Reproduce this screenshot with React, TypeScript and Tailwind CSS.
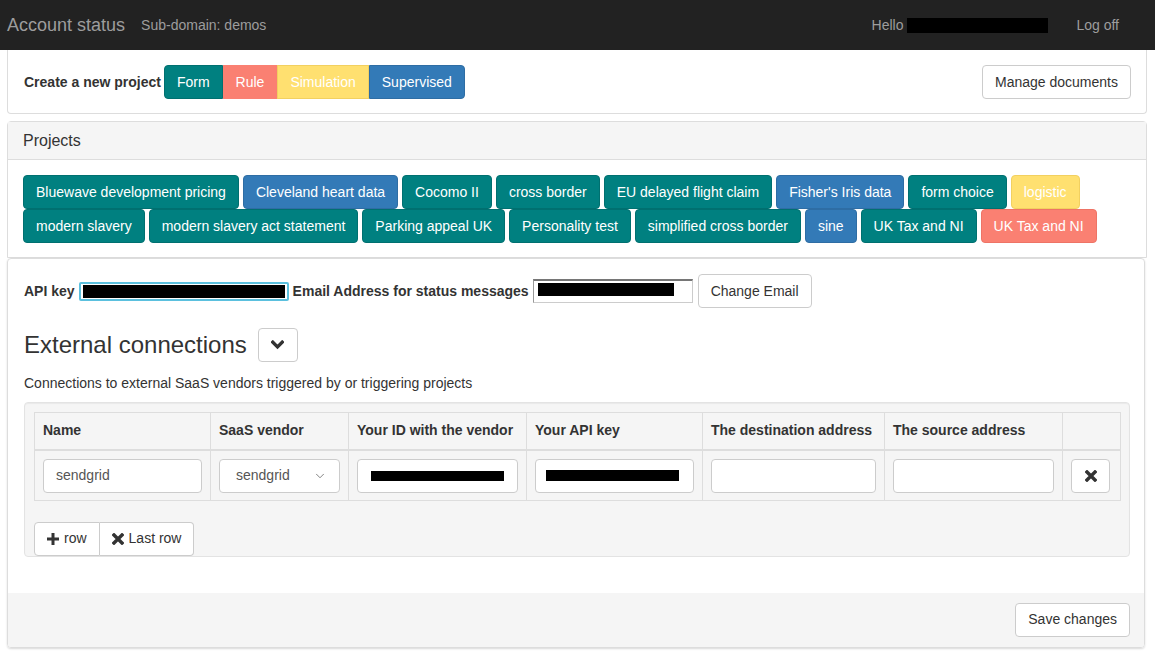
import { ChevronDown } from "lucide-react";

const font = { fontFamily: '"Liberation Sans", Arial, sans-serif' };

function PlusIcon() {
  return (
    <svg width="12" height="12" viewBox="0 0 12 12" className="inline-block">
      <path d="M4.5 0h3v4.5H12v3H7.5V12h-3V7.5H0v-3h4.5z" fill="#333" />
    </svg>
  );
}

function RemoveIcon() {
  return (
    <svg width="12" height="12" viewBox="0 0 12 12" className="inline-block">
      <path d="M2 2l8 8M10 2l-8 8" stroke="#333" strokeWidth="3.4" strokeLinecap="square" />
    </svg>
  );
}

function BoldChevron() {
  return (
    <svg width="13" height="10" viewBox="0 0 13 10">
      <path d="M1.8 2.2l4.7 4.7 4.7-4.7" fill="none" stroke="#333" strokeWidth="3.4" strokeLinecap="square" />
    </svg>
  );
}

const projects = [
  { name: "Bluewave development pricing", kind: "form" },
  { name: "Cleveland heart data", kind: "sup" },
  { name: "Cocomo II", kind: "form" },
  { name: "cross border", kind: "form" },
  { name: "EU delayed flight claim", kind: "form" },
  { name: "Fisher's Iris data", kind: "sup" },
  { name: "form choice", kind: "form" },
  { name: "logistic", kind: "sim" },
  { name: "modern slavery", kind: "form" },
  { name: "modern slavery act statement", kind: "form" },
  { name: "Parking appeal UK", kind: "form" },
  { name: "Personality test", kind: "form" },
  { name: "simplified cross border", kind: "form" },
  { name: "sine", kind: "sup" },
  { name: "UK Tax and NI", kind: "form" },
  { name: "UK Tax and NI", kind: "rule" },
];

const kindClass: Record<string, string> = {
  form: "bg-[#008080] border-[#007070]",
  sup: "bg-[#337ab7] border-[#2e6da4]",
  sim: "bg-[#ffe070] border-[#f2d060]",
  rule: "bg-[#fa8072] border-[#ee7466]",
};

const cols = [
  { label: "Name", w: "w-[176px]" },
  { label: "SaaS vendor", w: "w-[138px]" },
  { label: "Your ID with the vendor", w: "w-[178px]" },
  { label: "Your API key", w: "w-[176px]" },
  { label: "The destination address", w: "w-[182px]" },
  { label: "The source address", w: "w-[178px]" },
  { label: "", w: "w-[58px]" },
];

export default function App() {
  return (
    <div style={font} className="min-h-[658px] bg-white text-[14px] text-[#333]">
      {/* navbar */}
      <nav className="h-[50px] bg-[#222] flex items-center pl-[7px] pr-[36px] text-[#9d9d9d]">
        <span className="text-[18px]">Account status</span>
        <span className="ml-[16px] text-[14px]">Sub-domain: demos</span>
        <div className="ml-auto flex items-center">
          <span>Hello</span>
          <span className="ml-[4px] inline-block w-[141px] h-[15px] bg-black" />
          <span className="ml-[28px]">Log off</span>
        </div>
      </nav>

      {/* create panel */}
      <div className="mx-[7px] mr-[8px] border border-t-0 border-[#ddd] rounded-b-[4px] pl-[16px] pr-[15px] pt-[15px] pb-[14px] flex items-center">
        <span className="font-bold">Create a new project</span>
        <div className="ml-[3px] flex text-white">
          <span className="h-[34px] px-[12px] flex items-center bg-[#008080] border border-[#007070] rounded-l-[4px]">Form</span>
          <span className="h-[34px] px-[12px] flex items-center bg-[#fa8072] border border-[#fa8072]">Rule</span>
          <span className="h-[34px] px-[12px] flex items-center bg-[#ffe070] border border-[#f2d060]">Simulation</span>
          <span className="h-[34px] px-[12px] flex items-center bg-[#337ab7] border border-[#2e6da4] rounded-r-[4px]">Supervised</span>
        </div>
        <span className="ml-auto h-[34px] px-[12px] flex items-center border border-[#ccc] rounded-[4px] bg-white">Manage documents</span>
      </div>

      {/* projects panel */}
      <div className="mt-[7px] mx-[7px] mr-[8px] border border-[#ddd] rounded-t-[4px]">
        <div className="h-[38px] bg-[#f5f5f5] border-b border-[#ddd] px-[15px] flex items-center text-[16px]">Projects</div>
        <div className="pl-[15px] pr-[15px] pt-[15px] pb-[14px] flex flex-wrap gap-x-[4px]">
          {projects.map((p, i) => (
            <span
              key={i}
              className={`h-[34px] px-[12px] flex items-center text-white border rounded-[4px] ${kindClass[p.kind]}`}
            >
              {p.name}
            </span>
          ))}
        </div>
      </div>

      {/* settings panel */}
      <div className="mx-[7px] mr-[10px] border border-[#ddd] rounded-[4px] shadow-[0_1px_2px_rgba(0,0,0,0.15)] overflow-hidden">
        <div className="pl-[16px] pr-[14px] pt-[15px] pb-[15px]">
          <div className="flex items-center">
            <span className="font-bold">API key</span>
            <span className="ml-[4px] w-[210px] h-[19px] border-2 border-[#5bc0de] rounded-[2px] flex items-center px-[2px]">
              <span className="w-full h-[13px] bg-black" />
            </span>
            <span className="ml-[4px] font-bold">Email Address for status messages</span>
            <span className="ml-[4px] w-[160px] h-[24px] border border-[#ccc] border-t-[#767676] border-t-2 border-l-[#999] flex items-start pt-[2px] pl-[4px]">
              <span className="w-[136px] h-[13px] bg-black" />
            </span>
            <span className="ml-[5px] h-[34px] px-[12px] flex items-center border border-[#ccc] rounded-[4px] bg-white">Change Email</span>
          </div>

          <div className="mt-[20px] flex items-center">
            <h3 className="text-[24px] leading-[28px]">External connections</h3>
            <span className="ml-[11px] w-[40px] h-[34px] border border-[#ccc] rounded-[4px] flex items-center justify-center bg-white">
              <BoldChevron />
            </span>
          </div>

          <p className="mt-[11px] leading-[20px]">Connections to external SaaS vendors triggered by or triggering projects</p>

          <div className="mt-[9px] bg-[#f5f5f5] border border-[#e3e3e3] rounded-[4px] pt-[9px] px-[9px] shadow-[inset_0_1px_1px_rgba(0,0,0,0.05)]">
            <table className="table-fixed border-collapse w-[1086px]">
              <thead>
                <tr>
                  {cols.map((c, i) => (
                    <th
                      key={i}
                      className={`${c.w} h-[37px] border border-[#ddd] border-b-2 px-[8px] py-0 text-left font-bold`}
                    >
                      {c.label}
                    </th>
                  ))}
                </tr>
              </thead>
              <tbody>
                <tr>
                  <td className="border border-[#ddd] px-[8px] pt-[8px] pb-[7px]">
                    <div className="h-[34px] bg-white border border-[#ccc] rounded-[4px] px-[12px] flex items-center text-[#555]">sendgrid</div>
                  </td>
                  <td className="border border-[#ddd] px-[8px] pt-[8px] pb-[7px]">
                    <div className="h-[34px] bg-white border border-[#ccc] rounded-[4px] pl-[16px] pr-[12px] flex items-center justify-between text-[#555]">
                      sendgrid
                      <ChevronDown size={14} strokeWidth={1.25} color="#555" />
                    </div>
                  </td>
                  <td className="border border-[#ddd] px-[8px] pt-[8px] pb-[7px]">
                    <div className="h-[34px] bg-white border border-[#ccc] rounded-[4px] px-[13px] flex items-center">
                      <span className="w-[135px] h-[10px] bg-black" />
                    </div>
                  </td>
                  <td className="border border-[#ddd] px-[8px] pt-[8px] pb-[7px]">
                    <div className="h-[34px] bg-white border border-[#ccc] rounded-[4px] px-[10px] flex items-center">
                      <span className="w-[133px] h-[11px] bg-black" />
                    </div>
                  </td>
                  <td className="border border-[#ddd] px-[8px] pt-[8px] pb-[7px]">
                    <div className="h-[34px] bg-white border border-[#ccc] rounded-[4px]" />
                  </td>
                  <td className="border border-[#ddd] px-[8px] pt-[8px] pb-[7px]">
                    <div className="h-[34px] bg-white border border-[#ccc] rounded-[4px]" />
                  </td>
                  <td className="border border-[#ddd] px-[8px] pt-[8px] pb-[7px]">
                    <div className="h-[34px] w-[39px] bg-white border border-[#ccc] rounded-[4px] flex items-center justify-center">
                      <RemoveIcon />
                    </div>
                  </td>
                </tr>
              </tbody>
            </table>

            <div className="mt-[21px] flex">
              <span className="h-[34px] px-[12px] flex items-center gap-[5px] bg-white border border-[#ccc] rounded-l-[4px]">
                <PlusIcon />
                row
              </span>
              <span className="h-[34px] px-[12px] flex items-center gap-[5px] bg-white border border-l-0 border-[#ccc] rounded-r-[4px]">
                <RemoveIcon />
                Last row
              </span>
            </div>
          </div>
        </div>

        <div className="mt-[21px] bg-[#f5f5f5] px-[14px] py-[10px] flex justify-end">
          <span className="h-[34px] px-[12px] flex items-center border border-[#ccc] rounded-[4px] bg-white">Save changes</span>
        </div>
      </div>
    </div>
  );
}
